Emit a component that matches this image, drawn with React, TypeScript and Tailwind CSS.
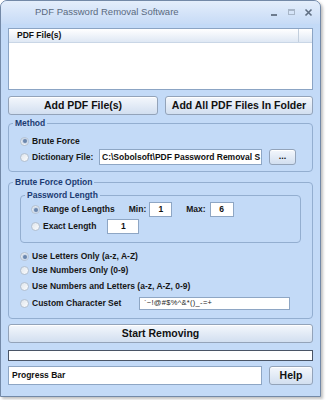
import React from "react";

const Radio = ({ checked }: { checked?: boolean }) => (
  <span className="flex h-[9px] w-[9px] shrink-0 items-center justify-center rounded-full border border-[#b3c0cf] bg-linear-to-br from-[#dfe5ec] to-[#fbfcfd]">
    {checked && (
      <span className="h-[4px] w-[4px] rounded-full bg-[#6a86ad] shadow-[0_0_1px_1px_#c3d2e6]" />
    )}
  </span>
);

const Option = ({ label, checked }: { label: string; checked?: boolean }) => (
  <div className="flex items-center gap-[3px]">
    <Radio checked={checked} />
    <span className="whitespace-nowrap text-[8.5px] font-bold text-[#161616]">{label}</span>
  </div>
);

const Box = ({ value, className }: { value: string; className: string }) => (
  <div
    className={`flex items-center justify-center overflow-hidden border border-[#8ea6c4] bg-white text-[8.5px] font-bold text-[#111] ${className}`}
  >
    {value}
  </div>
);

const btn =
  "flex items-center justify-center rounded-[3px] border border-[#93a3b9] bg-linear-to-b from-[#f4f7fc] to-[#d2dff0] font-bold text-[#111] shadow-[inset_0_1px_0_#ffffff]";

const Group = ({
  title,
  className,
  children,
}: {
  title: string;
  className?: string;
  children: React.ReactNode;
}) => (
  <fieldset className={`rounded-[4px] border border-[#93aed0] ${className ?? ""}`}>
    <legend className="ml-[4px] px-[2px] text-[8.5px] leading-[11px] font-bold text-[#1b3a72]">
      {title}
    </legend>
    {children}
  </fieldset>
);

export default function App() {
  return (
    <div className="h-[400px] w-[327px] bg-white font-['Liberation_Sans',Arial,sans-serif]">
      <div className="flex h-[397px] w-[321px] flex-col rounded-t-[7px] border border-[#7389a7] bg-[#c3daf7] shadow-[2px_2px_3px_rgba(0,0,0,0.25)]">
        {/* title bar */}
        <div className="flex h-[23px] shrink-0 items-center rounded-t-[6px] bg-linear-to-b from-[#e4eefb] to-[#c7dbf6] pr-[7px] pl-[34px]">
          <span className="text-[9.5px] text-[#5a6a80]">PDF Password Removal Software</span>
          <div className="ml-auto flex items-center gap-[8px]">
            <svg width="9" height="9" viewBox="0 0 9 9">
              <rect x="1" y="6" width="6" height="2" fill="#6d7b8e" />
            </svg>
            <svg width="9" height="9" viewBox="0 0 9 9">
              <rect x="1.5" y="1.5" width="6" height="5" fill="none" stroke="#a8b6c8" />
              <rect x="1.5" y="1.5" width="6" height="1.5" fill="#a8b6c8" />
            </svg>
            <svg width="9" height="9" viewBox="0 0 9 9">
              <path d="M1.5 1.5 L7.5 7.5 M7.5 1.5 L1.5 7.5" stroke="#5f6e82" strokeWidth="1.6" />
            </svg>
          </div>
        </div>

        <div className="flex flex-col px-[7px] pt-[4px]">
          {/* file list */}
          <div className="h-[62px] border border-[#8ba4c4] bg-white">
            <div className="flex h-[14px] border-b border-[#c9d6e6] bg-linear-to-b from-[#ffffff] to-[#dfe8f4]">
              <div className="flex w-[290px] items-center border-r border-[#c3cfdd] pl-[8px] text-[8.5px] font-bold text-[#111]">
                PDF File(s)
              </div>
            </div>
          </div>

          <div className="mt-[6px] flex h-[19px] gap-[7px]">
            <div className={`${btn} w-[150px] text-[10.5px]`}>Add PDF File(s)</div>
            <div className={`${btn} w-[148px] text-[10.5px]`}>Add All PDF Files In Folder</div>
          </div>

          {/* method */}
          <Group title="Method" className="mt-[3px]">
            <div className="flex flex-col gap-[1px] pt-[5px] pr-[16px] pb-[6px] pl-[11px]">
              <div className="flex h-[14px] items-center">
                <Option label="Brute Force" checked />
              </div>
              <div className="flex h-[16px] items-center">
                <Option label="Dictionary File:" />
                <div className="ml-auto flex h-[16px] w-[163px] items-center overflow-hidden border border-[#8ea6c4] bg-white pl-[2px] text-[8.5px] font-bold whitespace-nowrap text-[#111]">
                  C:\Sobolsoft\PDF Password Removal S
                </div>
                <div className={`${btn} ml-[7px] h-[16px] w-[27px] text-[9px]`}>...</div>
              </div>
            </div>
          </Group>

          {/* brute force options */}
          <Group title="Brute Force Option" className="mt-[5px]">
            <div className="flex flex-col pr-[11px] pb-[8px] pl-[11px]">
              <Group title="Password Length" className="mt-[2px]">
                <div className="flex flex-col gap-[2px] pt-[1px] pb-[8px] pl-[10px]">
                  <div className="flex h-[15px] items-center">
                    <Option label="Range of Lengths" checked />
                    <span className="ml-[14px] text-[8.5px] font-bold text-[#161616]">Min:</span>
                    <Box value="1" className="ml-[3px] h-[15px] w-[23px]" />
                    <span className="ml-[14px] text-[8.5px] font-bold text-[#161616]">Max:</span>
                    <Box value="6" className="ml-[4px] h-[15px] w-[24px]" />
                  </div>
                  <div className="flex h-[15px] items-center">
                    <Option label="Exact Length" />
                    <Box value="1" className="ml-[11px] h-[15px] w-[32px]" />
                  </div>
                </div>
              </Group>

              <div className="mt-[7px] flex h-[13px] items-center">
                <Option label="Use Letters Only (a-z, A-Z)" checked />
              </div>
              <div className="mt-[1px] flex h-[13px] items-center">
                <Option label="Use Numbers Only (0-9)" />
              </div>
              <div className="mt-[3px] flex h-[13px] items-center">
                <Option label="Use Numbers and Letters (a-z, A-Z, 0-9)" />
              </div>
              <div className="mt-[3px] flex h-[14px] items-center">
                <Option label="Custom Character Set" />
                <div className="ml-auto mr-[11px] flex h-[13px] w-[151px] items-center overflow-hidden border border-[#8ea6c4] bg-white pl-[4px] text-[7.5px] tracking-[0.3px] whitespace-nowrap text-[#222]">
                  `~!@#$%^&amp;*()_-=+
                </div>
              </div>
            </div>
          </Group>

          <div className={`${btn} mt-[5px] h-[19px] text-[10.5px]`}>Start Removing</div>

          <div className="mt-[7px] h-[11px] border border-[#4a5566] bg-white" />

          <div className="mt-[5px] flex h-[19px] gap-[7px]">
            <div className="flex flex-1 items-center border border-[#8ea6c4] bg-white pl-[3px] text-[8.5px] font-bold text-[#111]">
              Progress Bar
            </div>
            <div className={`${btn} w-[44px] text-[10.5px]`}>Help</div>
          </div>
        </div>
      </div>
    </div>
  );
}
